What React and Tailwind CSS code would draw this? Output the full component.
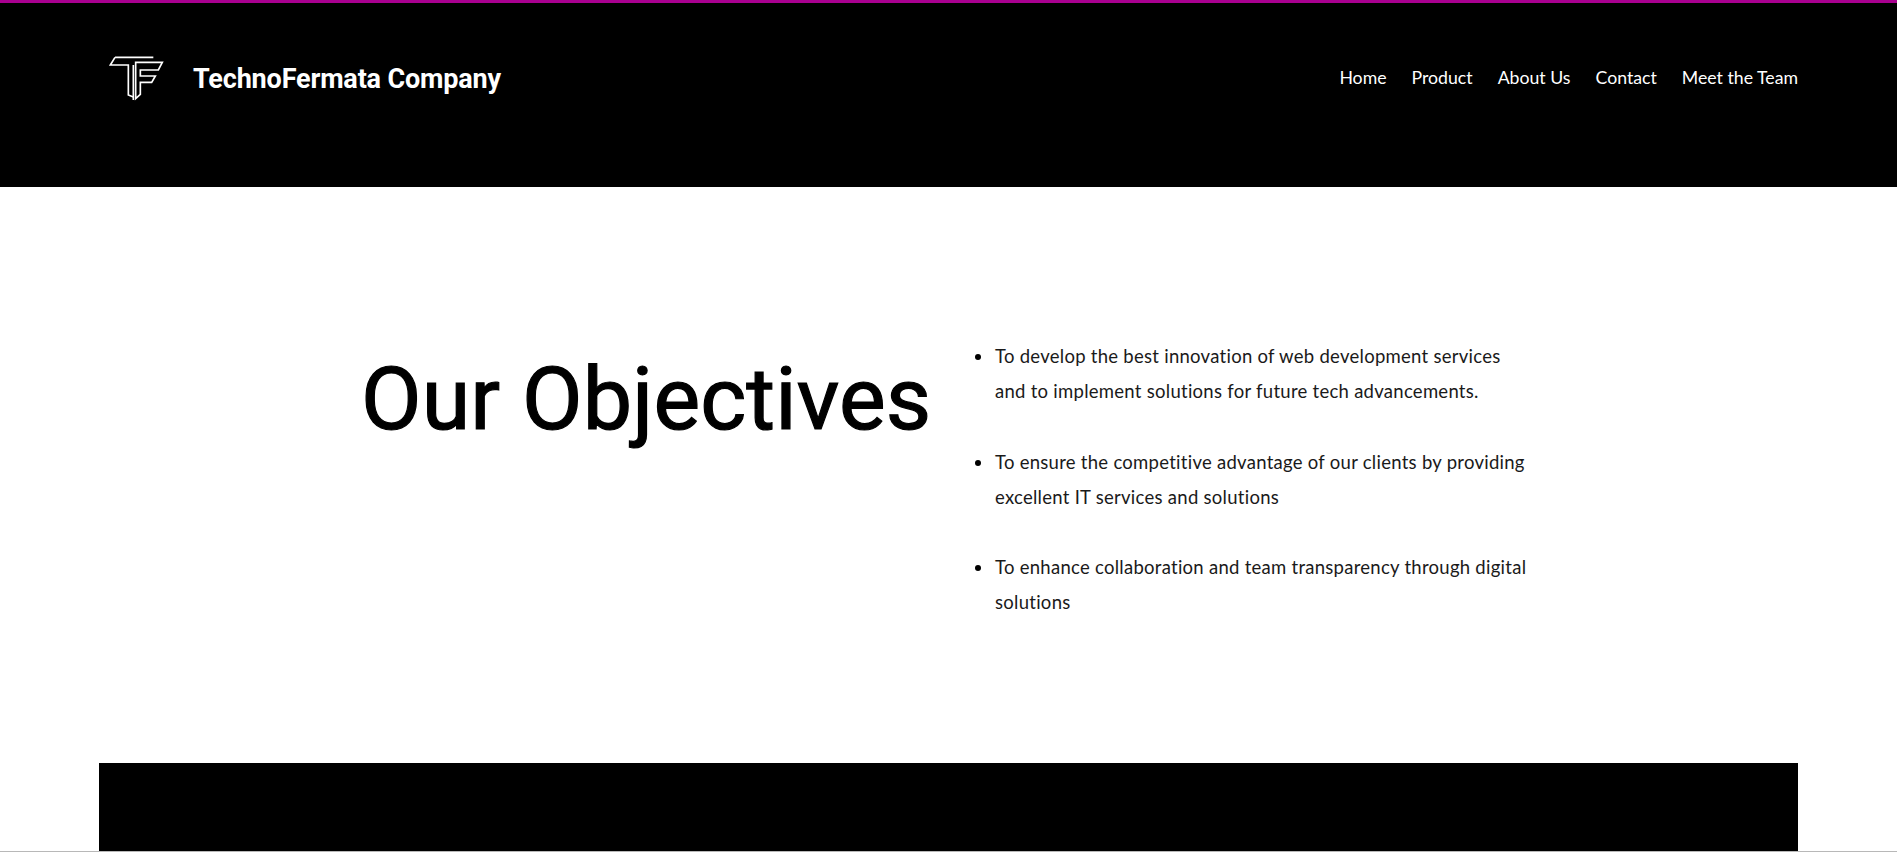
import React from 'react';

const navLinks = ['Home', 'Product', 'About Us', 'Contact', 'Meet the Team'];

const objectives = [
  ['To develop the best innovation of web development services', 'and to implement solutions for future tech advancements.'],
  ['To ensure the competitive advantage of our clients by providing', 'excellent IT services and solutions'],
  ['To enhance collaboration and team transparency through digital', 'solutions'],
];

const Logo = () => (
  <svg width="80" height="65" viewBox="0 0 240 195" fill="none" stroke="white" strokeWidth="5" className="shrink-0">
    <path d="M45 37H160M45 37L31 60H85V150L100 156" />
    <path d="M100 60V165" />
    <path d="M107 52H187L175 75H121V93H166L155 112H121V148L107 161V52Z" />
  </svg>
);

const Header = () => (
  <header className="h-[187px] shrink-0 bg-black border-t-[3px] border-[#a8008f] flex items-start justify-between pl-[100px] pr-[99px]">
    <div className="flex items-center mt-[42px]">
      <Logo />
      <span className="ml-[13px] pt-[4px] text-[27px] font-bold text-white font-['Roboto',sans-serif] tracking-[-0.17px]">
        TechnoFermata Company
      </span>
    </div>
    <nav className="flex gap-[25px] mt-[62px] text-[17.7px] text-white font-['Lato',sans-serif] font-normal">
      {navLinks.map((link) => (
        <a key={link} href="#">{link}</a>
      ))}
    </nav>
  </header>
);

const Objectives = () => (
  <section className="flex-1 flex pl-[361px] pt-[160px]">
    <h1 className="w-[634px] shrink-0 text-[88px] leading-[104px] font-normal text-black font-['Roboto',sans-serif] tracking-[0.1px] whitespace-nowrap [-webkit-text-stroke:1.2px_black]">
      Our Objectives
    </h1>
    <ul className="flex flex-col gap-[35px] mt-[-8px] text-[18.5px] leading-[35.3px] text-[#1a1a1a] font-['Lato',sans-serif] font-normal tracking-[0.27px]">
      {objectives.map((lines) => (
        <li key={lines[0]} className="relative">
          <span className="absolute left-[-20px] top-[15px] size-[6px] rounded-full bg-black" />
          {lines.map((line) => (
            <div key={line} className="whitespace-nowrap">{line}</div>
          ))}
        </li>
      ))}
    </ul>
  </section>
);

export default function App() {
  return (
    <div className="h-screen overflow-hidden bg-white flex flex-col border-b border-[#b8b8b8]">
      <Header />
      <Objectives />
      <div className="h-[88px] shrink-0 mx-[99px] bg-black" />
    </div>
  );
}
